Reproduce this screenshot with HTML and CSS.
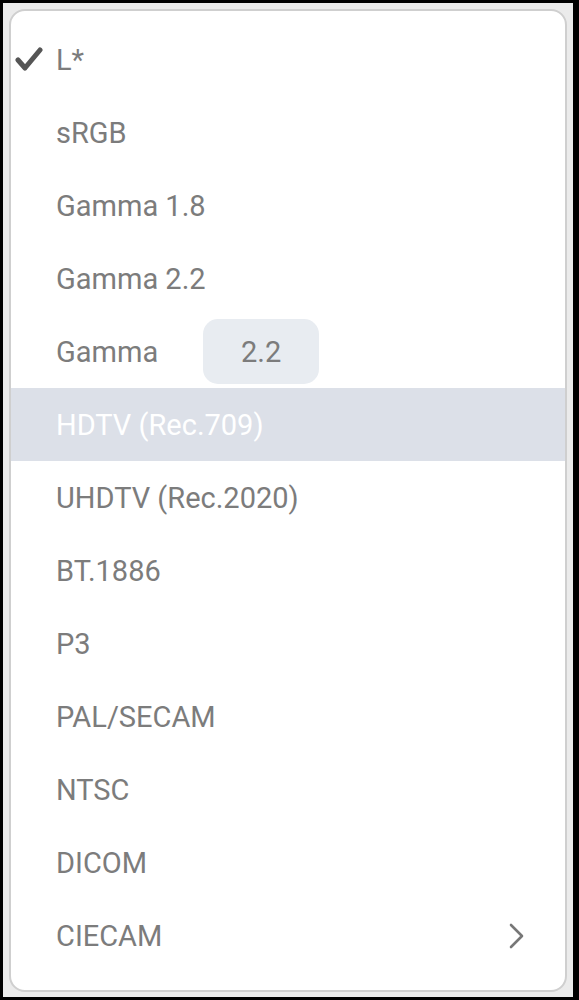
FILE: index.html
```html
<!DOCTYPE html>
<html lang="en">
<head>
    <meta charset="UTF-8">
    <meta name="viewport" content="width=device-width, initial-scale=1.0">
    <title>Transfer Curve Menu</title>
    <link rel="stylesheet" href="styles.css">
</head>
<body>

    <div class="frame">
        <ul class="menu">
            <li class="item checked">
                <svg class="check" viewBox="0 0 28 28" width="28" height="28">
                    <path d="M3 15 L10 23 L25 5" fill="none" stroke="#555" stroke-width="5" stroke-linecap="round" stroke-linejoin="round"/>
                </svg>
                <span>L*</span>
            </li>
            <li class="item"><span>sRGB</span></li>
            <li class="item"><span>Gamma 1.8</span></li>
            <li class="item"><span>Gamma 2.2</span></li>
            <li class="item">
                <span>Gamma</span>
                <span class="value">2.2</span>
            </li>
            <li class="item active"><span>HDTV (Rec.709)</span></li>
            <li class="item"><span>UHDTV (Rec.2020)</span></li>
            <li class="item"><span>BT.1886</span></li>
            <li class="item"><span>P3</span></li>
            <li class="item"><span>PAL/SECAM</span></li>
            <li class="item"><span>NTSC</span></li>
            <li class="item"><span>DICOM</span></li>
            <li class="item submenu">
                <span>CIECAM</span>
                <svg class="chevron" viewBox="0 0 18 28" width="18" height="28">
                    <path d="M4 3 L15 14 L4 25" fill="none" stroke="#777" stroke-width="2.6" stroke-linecap="round" stroke-linejoin="round"/>
                </svg>
            </li>
        </ul>
    </div>

</body>
</html>
```

FILE: styles.css
```css
html, body {
    margin: 0;
    height: 100%;
}
body {
    background-color: #000;
    padding: 3px 6px 3px 3px;
    box-sizing: border-box;
    font-family: Roboto, "Noto Sans", sans-serif;
}
.frame {
    background-color: #ebebeb;
    padding: 6px 6px 5px 6px;
    height: 100%;
    box-sizing: border-box;
}
.menu {
    list-style: none;
    margin: 0;
    padding: 12px 0 18px 0;
    height: 100%;
    box-sizing: border-box;
    background-color: #fff;
    border: 2px solid #cfcfcf;
    border-radius: 16px;
}
.item {
    position: relative;
    display: flex;
    align-items: center;
    height: 73px;
    padding: 0 40px 0 45px;
    font-size: 29px;
    color: #7c7c7c;
}
.item.active {
    background-color: #dce0e8;
    color: #fff;
}
.check {
    position: absolute;
    left: 4px;
    top: 22px;
}
.value {
    margin-left: 45px;
    width: 116px;
    height: 65px;
    border-radius: 15px;
    background-color: #e8ecf1;
    display: flex;
    align-items: center;
    justify-content: center;
}
.submenu {
    justify-content: space-between;
}
```
